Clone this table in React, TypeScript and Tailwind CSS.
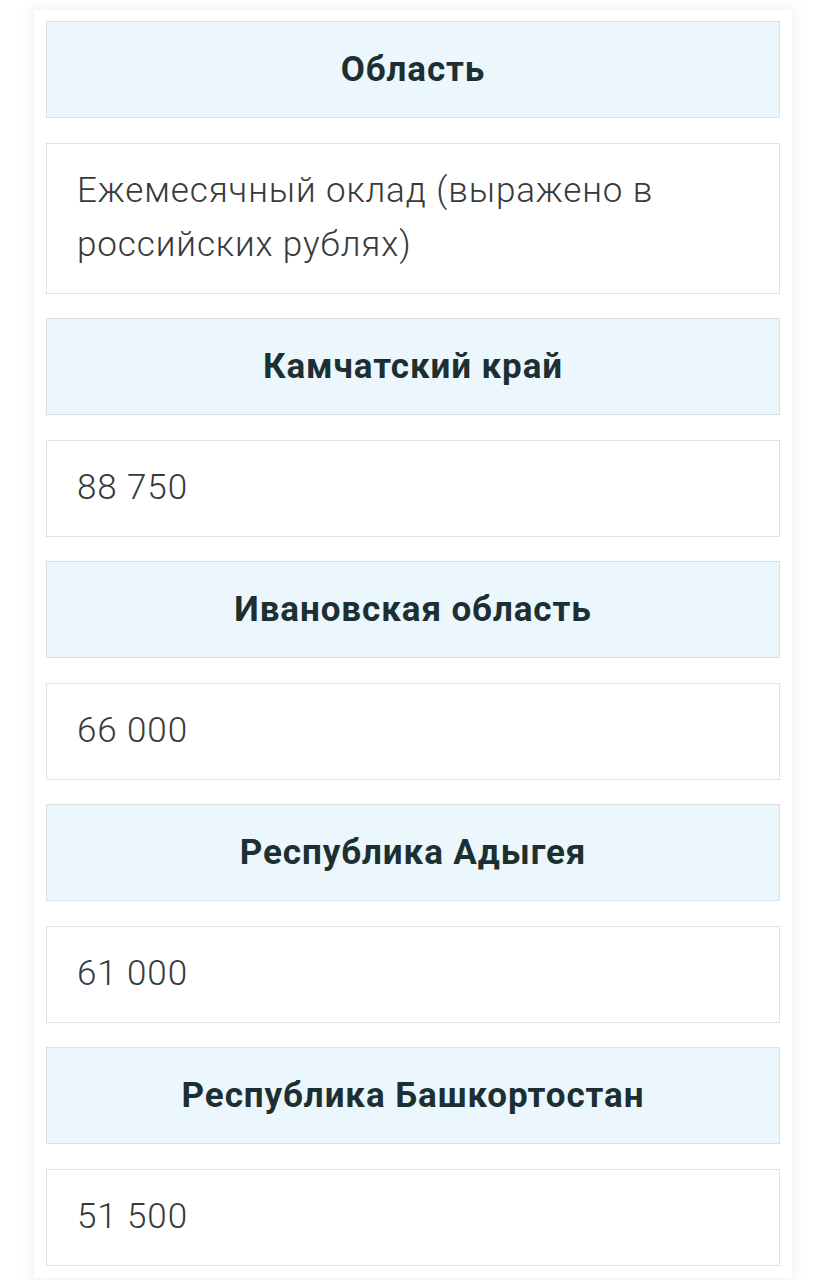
import React from 'react';

// строки таблицы: заголовок региона + значение оклада
const rows: { title: string; value: string }[] = [
    { title: 'Область', value: 'Ежемесячный оклад (выражено в российских рублях)' },
    { title: 'Камчатский край', value: '88 750' },
    { title: 'Ивановская область', value: '66 000' },
    { title: 'Республика Адыгея', value: '61 000' },
    { title: 'Республика Башкортостан', value: '51 500' },
];

const App: React.FC = () => {
    return (
        <div className="min-h-[1280px] bg-white pt-[10px] pl-[34px] pr-[34px] font-['Roboto','Liberation_Sans',sans-serif]">
            <div className="bg-white px-[12px] pt-[11px] pb-[12px] shadow-[0_0_14px_rgba(110,140,170,0.18)]">
                <div className="flex flex-col gap-[24.5px]">
                    {rows.map((row) => (
                        <React.Fragment key={row.title}>
                            <div className="flex min-h-[97px] items-center justify-center border border-[#d8e1e7] bg-[#ecf7fd] px-[30px] py-[20.5px] text-center">
                                <span className="text-[35px] leading-[54px] font-bold tracking-[0.9px] text-[#1c2f31]">
                                    {row.title}
                                </span>
                            </div>
                            <div className="flex min-h-[97px] items-center border border-[#dce3e8] bg-white px-[30px] py-[20.5px]">
                                <span className="text-[35px] leading-[54px] font-light tracking-[0.9px] text-[#363a3b]">
                                    {row.value}
                                </span>
                            </div>
                        </React.Fragment>
                    ))}
                </div>
            </div>
        </div>
    );
};

export default App;
